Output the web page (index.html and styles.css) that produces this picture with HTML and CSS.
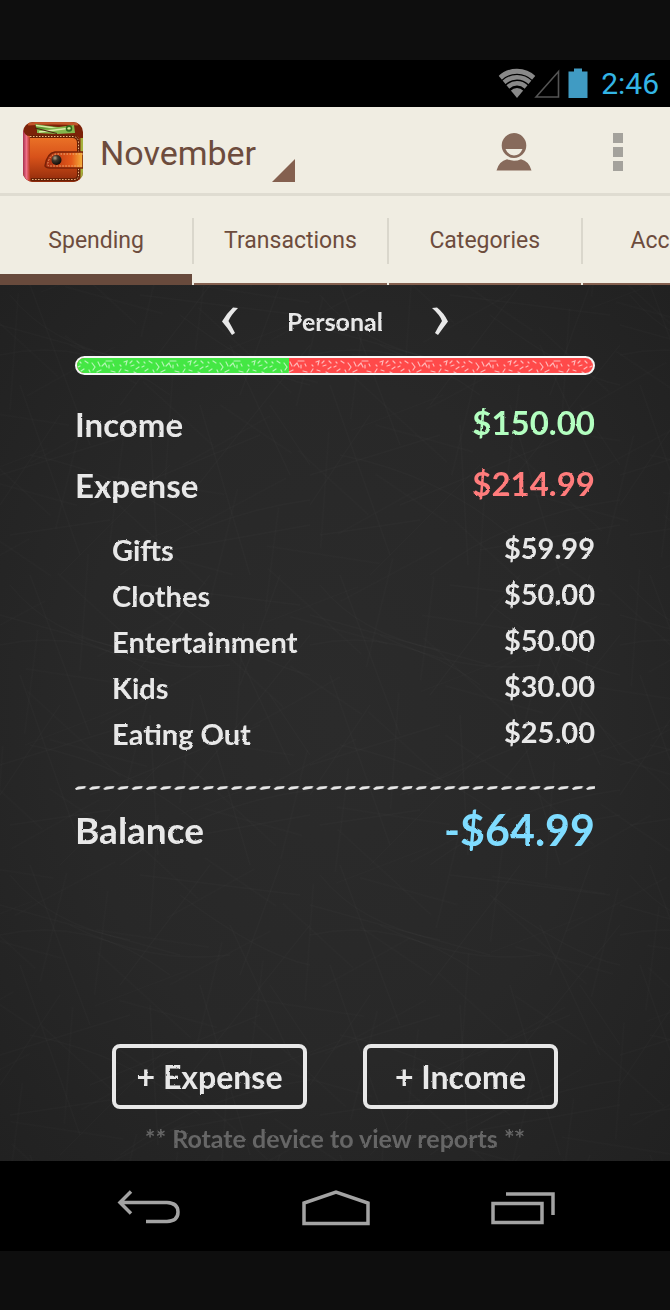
FILE: index.html
```html
<!DOCTYPE html>
<html lang="en">
<head>
<meta charset="utf-8">
<meta name="viewport" content="width=device-width, initial-scale=1">
<title>Spending – November</title>
<link rel="stylesheet" href="styles.css">
</head>
<body>
<svg class="defs" width="0" height="0" aria-hidden="true">
  <filter id="rough" x="-2%" y="-5%" width="104%" height="110%">
    <feTurbulence type="fractalNoise" baseFrequency="0.3" numOctaves="2" seed="4" result="n"/>
    <feDisplacementMap in="SourceGraphic" in2="n" scale="2" xChannelSelector="R" yChannelSelector="G"/>
  </filter>
</svg>

<div class="statusbar">
  <svg width="62" height="32" viewBox="0 0 62 32" role="img" aria-label="Wi-Fi, no signal">
    <clipPath id="wedge"><path d="M19 30 0 7V0H38V7Z"/></clipPath>
    <g clip-path="url(#wedge)" fill="none" stroke="#898989">
      <circle cx="19" cy="28" r="24.800" stroke-width="5"/>
      <circle cx="19" cy="28" r="18.800" stroke-width="4.500"/>
      <circle cx="19" cy="28" r="12.800" stroke-width="4.500"/>
      <circle cx="19" cy="29" r="4.500" stroke-width="9"/>
    </g>
    <path d="M38 29 60.500 3.500V29Z" fill="none" stroke="#545454" stroke-width="1.600"/>
  </svg>
  <svg class="battery" width="20" height="30" viewBox="0 0 20 30" role="img" aria-label="Battery full"><path d="M.5 3.500H6V.5h8v3H19.500V30H.5Z" fill="#409bc3"/></svg>
  <time class="clock">2:46</time>
</div>

<header class="actionbar">
  <svg class="logo" width="60" height="60" viewBox="0 0 60 60" role="img" aria-label="Wallet">
    <defs>
      <linearGradient id="leather" x1="0" y1="0" x2="0" y2="1"><stop offset="0" stop-color="#ef7a2a"/><stop offset=".5" stop-color="#d8521a"/><stop offset="1" stop-color="#8f2a0b"/></linearGradient>
      <linearGradient id="spine" x1="0" x2="1"><stop offset="0" stop-color="#a5304e"/><stop offset=".5" stop-color="#ee6f86"/><stop offset="1" stop-color="#b9351a"/></linearGradient>
      <linearGradient id="strap" x1="0" x2="1"><stop offset="0" stop-color="#a52b10"/><stop offset=".7" stop-color="#e5591a"/><stop offset="1" stop-color="#f5b43c"/></linearGradient>
      <radialGradient id="snap" cx=".35" cy=".3" r=".7"><stop offset="0" stop-color="#b3a78c"/><stop offset=".4" stop-color="#40382c"/><stop offset="1" stop-color="#100c08"/></radialGradient>
      <clipPath id="rounded"><rect width="60" height="60" rx="10"/></clipPath>
    </defs>
    <g clip-path="url(#rounded)">
      <rect width="60" height="60" fill="#7c2208"/>
      <path d="M5 2Q30 0 55 2" fill="none" stroke="#c2562a" stroke-width="3"/>
      <path d="M12 2 50 7 52 11 14 8Z" fill="#5f9b34"/><path d="M13 3.500 40 7" stroke="#d9e9a4" stroke-width="1.500"/>
      <path d="M14 8 51 3 52 11 34 12 14 11Z" fill="#84b84c"/><path d="M16 10 48 6" stroke="#dcebaa" stroke-width="1.500"/>
      <path d="M12 6 34 11.500" stroke="#4b2410" stroke-width="1.200"/>
      <circle cx="46" cy="6.500" r="2.500" fill="none" stroke="#2f671c" stroke-width="1.500"/>
      <path d="M0 10Q1 14 7 14H52Q57 14 57 20V60H0Z" fill="url(#leather)"/>
      <path d="M0 6Q1 14 7 15V60H0Z" fill="url(#spine)"/>
      <path d="M7 14.500H50Q55.500 15 55.500 21V54Q55 57.500 51 57.500H8" fill="none" stroke="#672006" stroke-width="3"/>
      <path d="M7 14.500H50Q55.500 15 55.500 21V54Q55 57.500 51 57.500H8" fill="none" stroke="#f2bd86" stroke-width="1" stroke-dasharray="1.500 1.500"/>
      <path d="M57.500 16H60V56H57.500Z" fill="#a5b13c"/>
      <path d="M60 30H32Q24 31 22 44Q23 46 27 46H60Z" fill="url(#strap)" stroke="#792208" stroke-width="1.500"/>
      <path d="M60 32H33Q26 33 24.500 43Q25 44 28 44H60" fill="none" stroke="#f3b276" stroke-dasharray="1.500 1.500"/>
      <circle cx="33.500" cy="38" r="5" fill="url(#snap)"/>
    </g>
  </svg>
  <button class="month" type="button">November
    <svg width="23" height="23" viewBox="0 0 23 23" aria-hidden="true"><path d="M23 0V23H0Z" fill="#84604f"/></svg>
  </button>
  <button class="icon-btn person" type="button" aria-label="Account">
    <svg width="36" height="38" viewBox="0 0 36 38"><path fill="#876a5b" fill-rule="evenodd" d="M18 0a12.300 12.500 0 1 1 0 25A12.300 12.500 0 0 1 18 0ZM9.500 16q2.500 6.500 8.500 6.500T26.500 16Z"/><path fill="#876a5b" d="M.5 37.500Q3 28 11 26.200q7 3 14 0Q33 28 35.500 37.500Z"/></svg>
  </button>
  <button class="icon-btn more" type="button" aria-label="More options">
    <svg width="10" height="38" viewBox="0 0 10 38" fill="#a4a29c"><path d="M0 0H10V10H0ZM0 14H10V24H0ZM0 28H10V38H0Z"/></svg>
  </button>
</header>

<nav class="tabs" aria-label="Sections">
  <a class="tab tab-current" href="#spending" aria-current="page"><span>Spending</span></a>
  <a class="tab" href="#transactions"><span>Transactions</span></a>
  <a class="tab" href="#categories"><span>Categories</span></a>
  <a class="tab" href="#accounts"><span>Accounts</span></a>
</nav>

<main class="board" id="spending">
  <svg class="scratches" aria-hidden="true">
    <defs>
      <pattern id="lines" width="310" height="290" patternUnits="userSpaceOnUse">
        <g fill="none" stroke="#fff" stroke-opacity=".016">
          <path d="M0 40 180 90M30 0 90 160M210 0 120 120M310 60 190 210M0 190 130 150M60 290 170 180M250 290 200 120M310 240 170 265M20 100 80 270M140 10 300 30M230 60 290 190M90 220 260 150M10 250 110 235M150 140 158 280M280 0 240 110"/>
          <path d="M0 70Q90 50 170 110M70 60Q150 100 230 90M120 290Q200 230 310 215M10 10Q50 60 130 75M180 30Q260 90 310 100M30 170Q130 190 200 250M0 220 60 130M270 120 310 180"/>
        </g>
      </pattern>
      <pattern id="fine-lines" width="170" height="210" patternUnits="userSpaceOnUse" patternTransform="rotate(24)">
        <path d="M0 30 90 60M20 0 60 110M130 10 70 90M170 60 100 150M10 130 120 100M40 200 110 130M150 200 130 90M160 170 60 185M80 20 165 35M20 150 140 190M5 90 35 190" fill="none" stroke="#fff" stroke-opacity=".016"/>
      </pattern>
    </defs>
    <rect width="100%" height="100%" fill="url(#lines)"/>
    <rect width="100%" height="100%" fill="url(#fine-lines)"/>
  </svg>

  <div class="switcher">
    <button class="arrow" type="button" aria-label="Previous account"><svg width="18" height="28" viewBox="0 0 18 28"><path d="M12 0.500 17 1Q10 8 7.500 14Q11 20 14 26L11 28Q6 20 1 14.500Q6 6 12 .5Z" fill="#e8e8e8"/></svg></button>
    <h1 class="account chalk">Personal</h1>
    <button class="arrow" type="button" aria-label="Next account"><svg width="18" height="28" viewBox="0 0 18 28"><path d="M6 .5 1 1Q9 8 11 14Q7 20 4 26L7 28Q12 21 17 14.500Q13 6 6 .5Z" fill="#e8e8e8"/></svg></button>
  </div>

  <div class="ratio" role="img" aria-label="Income compared with expense">
    <div class="ratio-income" style="width:41.1%"></div>
    <svg class="specks" aria-hidden="true">
      <defs><pattern id="speck" width="64" height="16" patternUnits="userSpaceOnUse"><path d="M1 9 3 8M4 13 7 11M8 3 11 5M15 5 18 9 16 12M21 4 23 8M25 8 28 5 30 9M29 3 35 3M32 7 32 10M36 6 37 8M42 14 44 11M47 4 50 3 49 7M53 5 55 3M54 8 57 7M59 11 62 9M12 12 13 14M20 14 24 12M34 13 38 14M48 12 51 13M57 14 59 15M60 3 62 5M43 7 44 8M3 4 4 5" fill="none" stroke="#fff" stroke-opacity=".6" stroke-width="1.200" stroke-linecap="round"/></pattern></defs>
      <rect width="100%" height="100%" fill="url(#speck)"/>
    </svg>
  </div>

  <table class="ledger chalk">
    <tbody class="totals">
      <tr><th scope="row">Income</th><td class="income">$150.00</td></tr>
      <tr><th scope="row">Expense</th><td class="expense">$214.99</td></tr>
    </tbody>
    <tbody class="items">
      <tr><th scope="row">Gifts</th><td>$59.99</td></tr>
      <tr><th scope="row">Clothes</th><td>$50.00</td></tr>
      <tr><th scope="row">Entertainment</th><td>$50.00</td></tr>
      <tr><th scope="row">Kids</th><td>$30.00</td></tr>
      <tr><th scope="row">Eating Out</th><td>$25.00</td></tr>
    </tbody>
  </table>

  <svg class="rule" aria-hidden="true">
    <defs><pattern id="dash" x="0" width="14.200" height="6" patternUnits="userSpaceOnUse"><path d="M0 3.500 3 1.500 11 1 10 3.500 1 5Z" fill="#e6e6e6"/></pattern></defs>
    <rect width="100%" height="6" fill="url(#dash)"/>
  </svg>

  <div class="balance chalk"><span>Balance</span><output class="balance-amount">-$64.99</output></div>

  <div class="actions">
    <button class="add" type="button"><span class="chalk">+ Expense</span></button>
    <button class="add" type="button"><span class="chalk">+ Income</span></button>
  </div>
  <p class="hint chalk">** Rotate device to view reports **</p>
</main>

<nav class="navbar" aria-label="System">
  <button class="icon-btn" type="button" aria-label="Back"><svg width="64" height="36" viewBox="0 0 64 36" fill="none" stroke="#a3a3a3" stroke-width="3.500"><path d="M15 1.500 4 12.500 15 23.500M4 12.500H51Q62 13 62 22T51 31.500H30"/></svg></button>
  <button class="icon-btn" type="button" aria-label="Home"><svg width="68" height="36" viewBox="0 0 68 36" fill="none" stroke="#a3a3a3" stroke-width="3.500"><path d="M2 33.500V13L34 2 66 13V33.500Z"/></svg></button>
  <button class="icon-btn" type="button" aria-label="Recent apps"><svg width="64" height="36" viewBox="0 0 64 36" fill="none" stroke="#a3a3a3" stroke-width="3.500"><path d="M2 13.500H51V32.500H2ZM15 4H62V25"/></svg></button>
</nav>
</body>
</html>
```

FILE: styles.css
```css
* { box-sizing: border-box; }

body {
  margin: 0;
  min-height: 100vh;
  padding: 60px 0 59px;
  display: flex;
  flex-direction: column;
  background: #0e0e0e;
  color: #6d4c3d;
  font-family: Roboto, "Liberation Sans", sans-serif;
  overflow-x: hidden;
}

button {
  padding: 0;
  border: 0;
  background: none;
  color: inherit;
  font: inherit;
  cursor: pointer;
}

svg { display: block; }

.defs { position: absolute; }

.statusbar {
  height: 47px;
  padding: 0 11px 0 0;
  display: flex;
  justify-content: flex-end;
  align-items: center;
  background: #000;
}

.battery { margin: 0 13px 2px 8px; }

.clock {
  color: #33b5e5;
  font-size: 30px;
  line-height: 47px;
}

.actionbar {
  height: 89px;
  padding: 3px 47px 0 23px;
  display: flex;
  align-items: center;
  background: #f0ede2;
  border-bottom: 3px solid #dfdcd1;
}

.month {
  height: 60px;
  margin: 0 auto 0 17px;
  display: flex;
  align-items: flex-end;
  gap: 16px;
  font-size: 34px;
  line-height: 58px;
}

.person { margin-right: 81px; }

.tabs {
  display: flex;
  overflow: hidden;
  background: #f0ede2;
}

.tab {
  flex: 0 0 29%;
  height: 89px;
  padding: 22px 0;
  background: linear-gradient(#84604f, #84604f) left bottom / calc(100% - 2px) 2px no-repeat;
  color: inherit;
  font-size: 23px;
  line-height: 46px;
  text-align: center;
  text-decoration: none;
}

.tab span {
  display: block;
  border-right: 2px solid #dad7cc;
}

.tab-current {
  background-image: linear-gradient(#684a3c, #684a3c);
  background-size: calc(100% - 2px) 11px;
}

.board {
  position: relative;
  flex: 1 0 auto;
  padding: 22px 11.200% 8px;
  display: flex;
  flex-direction: column;
  background: radial-gradient(ellipse at center, #2b2b2b 0%, #282828 55%, #212121 100%);
  color: #e8e8e8;
  font-family: Lato, "Open Sans", sans-serif;
}

.scratches {
  position: absolute;
  inset: 0;
  width: 100%;
  height: 100%;
  pointer-events: none;
}

.chalk {
  filter: url(#rough);
  font-weight: 700;
}

.switcher {
  display: flex;
  justify-content: center;
  align-items: center;
  gap: 48px;
}

.account {
  margin: 0;
  font-size: 25px;
  line-height: 28px;
}

.ratio {
  position: relative;
  height: 19px;
  margin-top: 21px;
  overflow: hidden;
  border: 2px solid #f6f6f6;
  border-radius: 10px;
  background: #ff4a4a;
}

.ratio-income {
  height: 100%;
  background: #44e744;
}

.specks {
  position: absolute;
  inset: 0;
  width: 100%;
  height: 100%;
}

.ledger {
  width: 100%;
  margin-top: 18px;
  border-collapse: collapse;
}

.ledger th {
  padding: 0;
  text-align: left;
}

.ledger td {
  padding: 0 0 3px;
  text-align: right;
}

.totals th {
  height: 61px;
  font-size: 33px;
}

.totals td { font-size: 33px; }

.income { color: #b3ffc0; }

.expense { color: #ff7b7b; }

.items::before {
  content: "";
  display: block;
  height: 11px;
}

.items th {
  height: 46px;
  padding-left: 37px;
  font-size: 29px;
}

.items td { font-size: 29px; }

.rule {
  width: 100%;
  height: 6px;
  margin-top: 29px;
}

.balance {
  margin-top: 14px;
  display: flex;
  justify-content: space-between;
  align-items: center;
  font-size: 37px;
  line-height: 50px;
}

.balance-amount {
  color: #7fdcff;
  font-size: 43px;
}

.actions {
  margin-top: auto;
  padding: 0 37px;
  display: flex;
  gap: 56px;
}

.add {
  flex: 1;
  height: 65px;
  border: 4px solid #e8e8e8;
  border-radius: 8px;
  font-size: 32px;
}

.add span { display: block; }

.hint {
  margin: 14px 0 0;
  color: #666;
  font-size: 25px;
  line-height: 30px;
  text-align: center;
  white-space: nowrap;
}

.navbar {
  height: 90px;
  padding: 4px 115px 0 116px;
  display: flex;
  justify-content: space-between;
  align-items: center;
  background: #000;
}
```
